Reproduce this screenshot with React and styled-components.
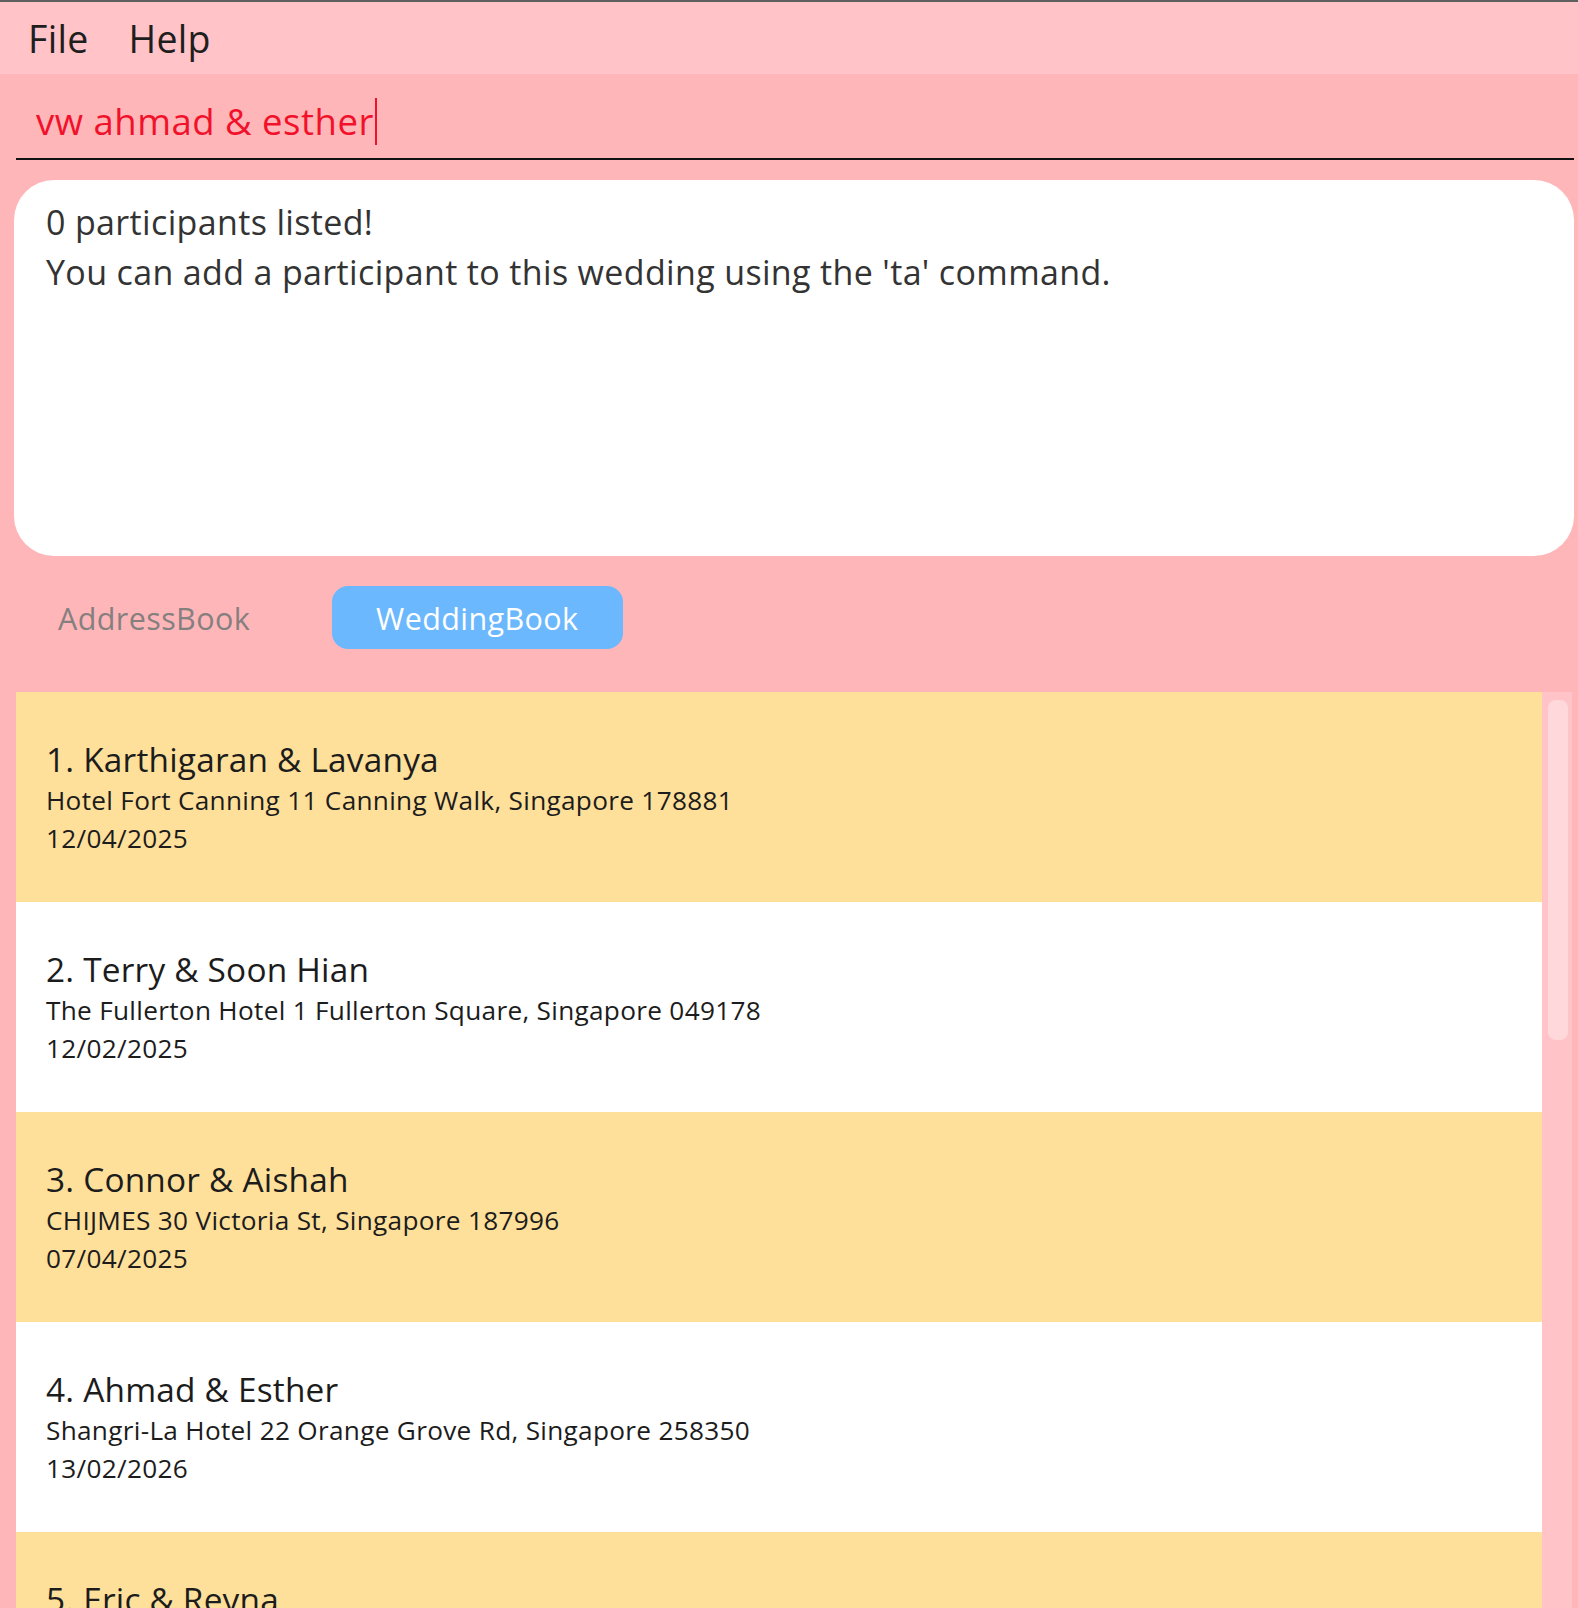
import React from "react";
import styled, { createGlobalStyle } from "styled-components";

const Global = createGlobalStyle`
  html, body { margin: 0; padding: 0; background: #ffb6b9; }
  body { font-family: "Open Sans", "Noto Sans", sans-serif; }
  * { box-sizing: border-box; }
`;

const Window = styled.div`
  width: 1578px;
  height: 1608px;
  background: #ffb6b9;
  border-top: 2px solid #5f5f5f;
  display: flex;
  flex-direction: column;
  overflow: hidden;
`;

const MenuBar = styled.div`
  height: 72px;
  background: #ffc3c8;
  display: flex;
  align-items: center;
  gap: 40px;
  padding-left: 28px;
`;

const MenuItem = styled.span`
  font-size: 37.5px;
  color: #1e1e1e;
  letter-spacing: 0.3px;
`;

const CommandArea = styled.div`
  height: 106px;
  padding: 0 4px 20px 16px;
  display: flex;
  align-items: flex-end;
`;

const CommandInput = styled.div`
  flex: 1;
  height: 70px;
  border-bottom: 2px solid #111;
  display: flex;
  align-items: center;
  padding: 0 0 6px 20px;
  font-size: 36.5px;
  color: #f2112a;
  letter-spacing: 0.5px;
`;

const Caret = styled.span`
  display: inline-block;
  width: 2px;
  height: 47px;
  background: #f2112a;
  margin-left: 1px;
`;

const ResultBox = styled.div`
  margin: 0 4px 0 14px;
  height: 376px;
  background: #fff;
  border-radius: 40px;
  padding: 17px 32px;
  color: #333;
  font-size: 34px;
  line-height: 50px;
  letter-spacing: 0.35px;
`;

const TabRow = styled.div`
  display: flex;
  gap: 38px;
  padding: 30px 0 43px 14px;
`;

const Tab = styled.div`
  height: 63px;
  padding: 0 44px;
  border-radius: 16px;
  display: flex;
  align-items: center;
  font-size: 30.5px;
  letter-spacing: 0.4px;
  background: ${(p) => (p.$active ? "#6bb8fe" : "transparent")};
  color: ${(p) => (p.$active ? "#ffffff" : "#858080")};
`;

const ListArea = styled.div`
  flex: 1;
  display: flex;
  margin: 0 6px 0 16px;
  min-height: 0;
`;

const List = styled.div`
  flex: 1;
  display: flex;
  flex-direction: column;
`;

const Card = styled.div`
  height: 210px;
  flex-shrink: 0;
  background: ${(p) => (p.$odd ? "#ffe09a" : "#ffffff")};
  display: flex;
  flex-direction: column;
  justify-content: center;
  padding-left: 30px;
  color: #1c1c1c;
`;

const Title = styled.div`
  font-size: 33.4px;
  line-height: 44px;
  letter-spacing: 0.2px;
`;

const Detail = styled.div`
  font-size: 26.2px;
  line-height: 38px;
  letter-spacing: 0.3px;
`;

const ScrollTrack = styled.div`
  width: 30px;
  background: #ffc3c8;
  padding: 8px 4px 0 6px;
`;

const ScrollThumb = styled.div`
  height: 340px;
  background: #ffd8dc;
  border-radius: 8px;
`;

const weddings = [
  ["Karthigaran & Lavanya", "Hotel Fort Canning 11 Canning Walk, Singapore 178881", "12/04/2025"],
  ["Terry & Soon Hian", "The Fullerton Hotel 1 Fullerton Square, Singapore 049178", "12/02/2025"],
  ["Connor & Aishah", "CHIJMES 30 Victoria St, Singapore 187996", "07/04/2025"],
  ["Ahmad & Esther", "Shangri-La Hotel 22 Orange Grove Rd, Singapore 258350", "13/02/2026"],
  ["Eric & Reyna", "Raffles Hotel 1 Beach Rd, Singapore 189673", "20/06/2025"],
];

export default function App() {
  return (
    <Window>
      <Global />
      <MenuBar>
        <MenuItem>File</MenuItem>
        <MenuItem>Help</MenuItem>
      </MenuBar>
      <CommandArea>
        <CommandInput>
          vw ahmad &amp; esther
          <Caret />
        </CommandInput>
      </CommandArea>
      <ResultBox>
        <div>0 participants listed!</div>
        <div>You can add a participant to this wedding using the 'ta' command.</div>
      </ResultBox>
      <TabRow>
        <Tab>AddressBook</Tab>
        <Tab $active>WeddingBook</Tab>
      </TabRow>
      <ListArea>
        <List>
          {weddings.map((w, i) => (
            <Card key={i} $odd={i % 2 === 0}>
              <Title>
                {i + 1}. {w[0]}
              </Title>
              <Detail>{w[1]}</Detail>
              <Detail>{w[2]}</Detail>
            </Card>
          ))}
        </List>
        <ScrollTrack>
          <ScrollThumb />
        </ScrollTrack>
      </ListArea>
    </Window>
  );
}
